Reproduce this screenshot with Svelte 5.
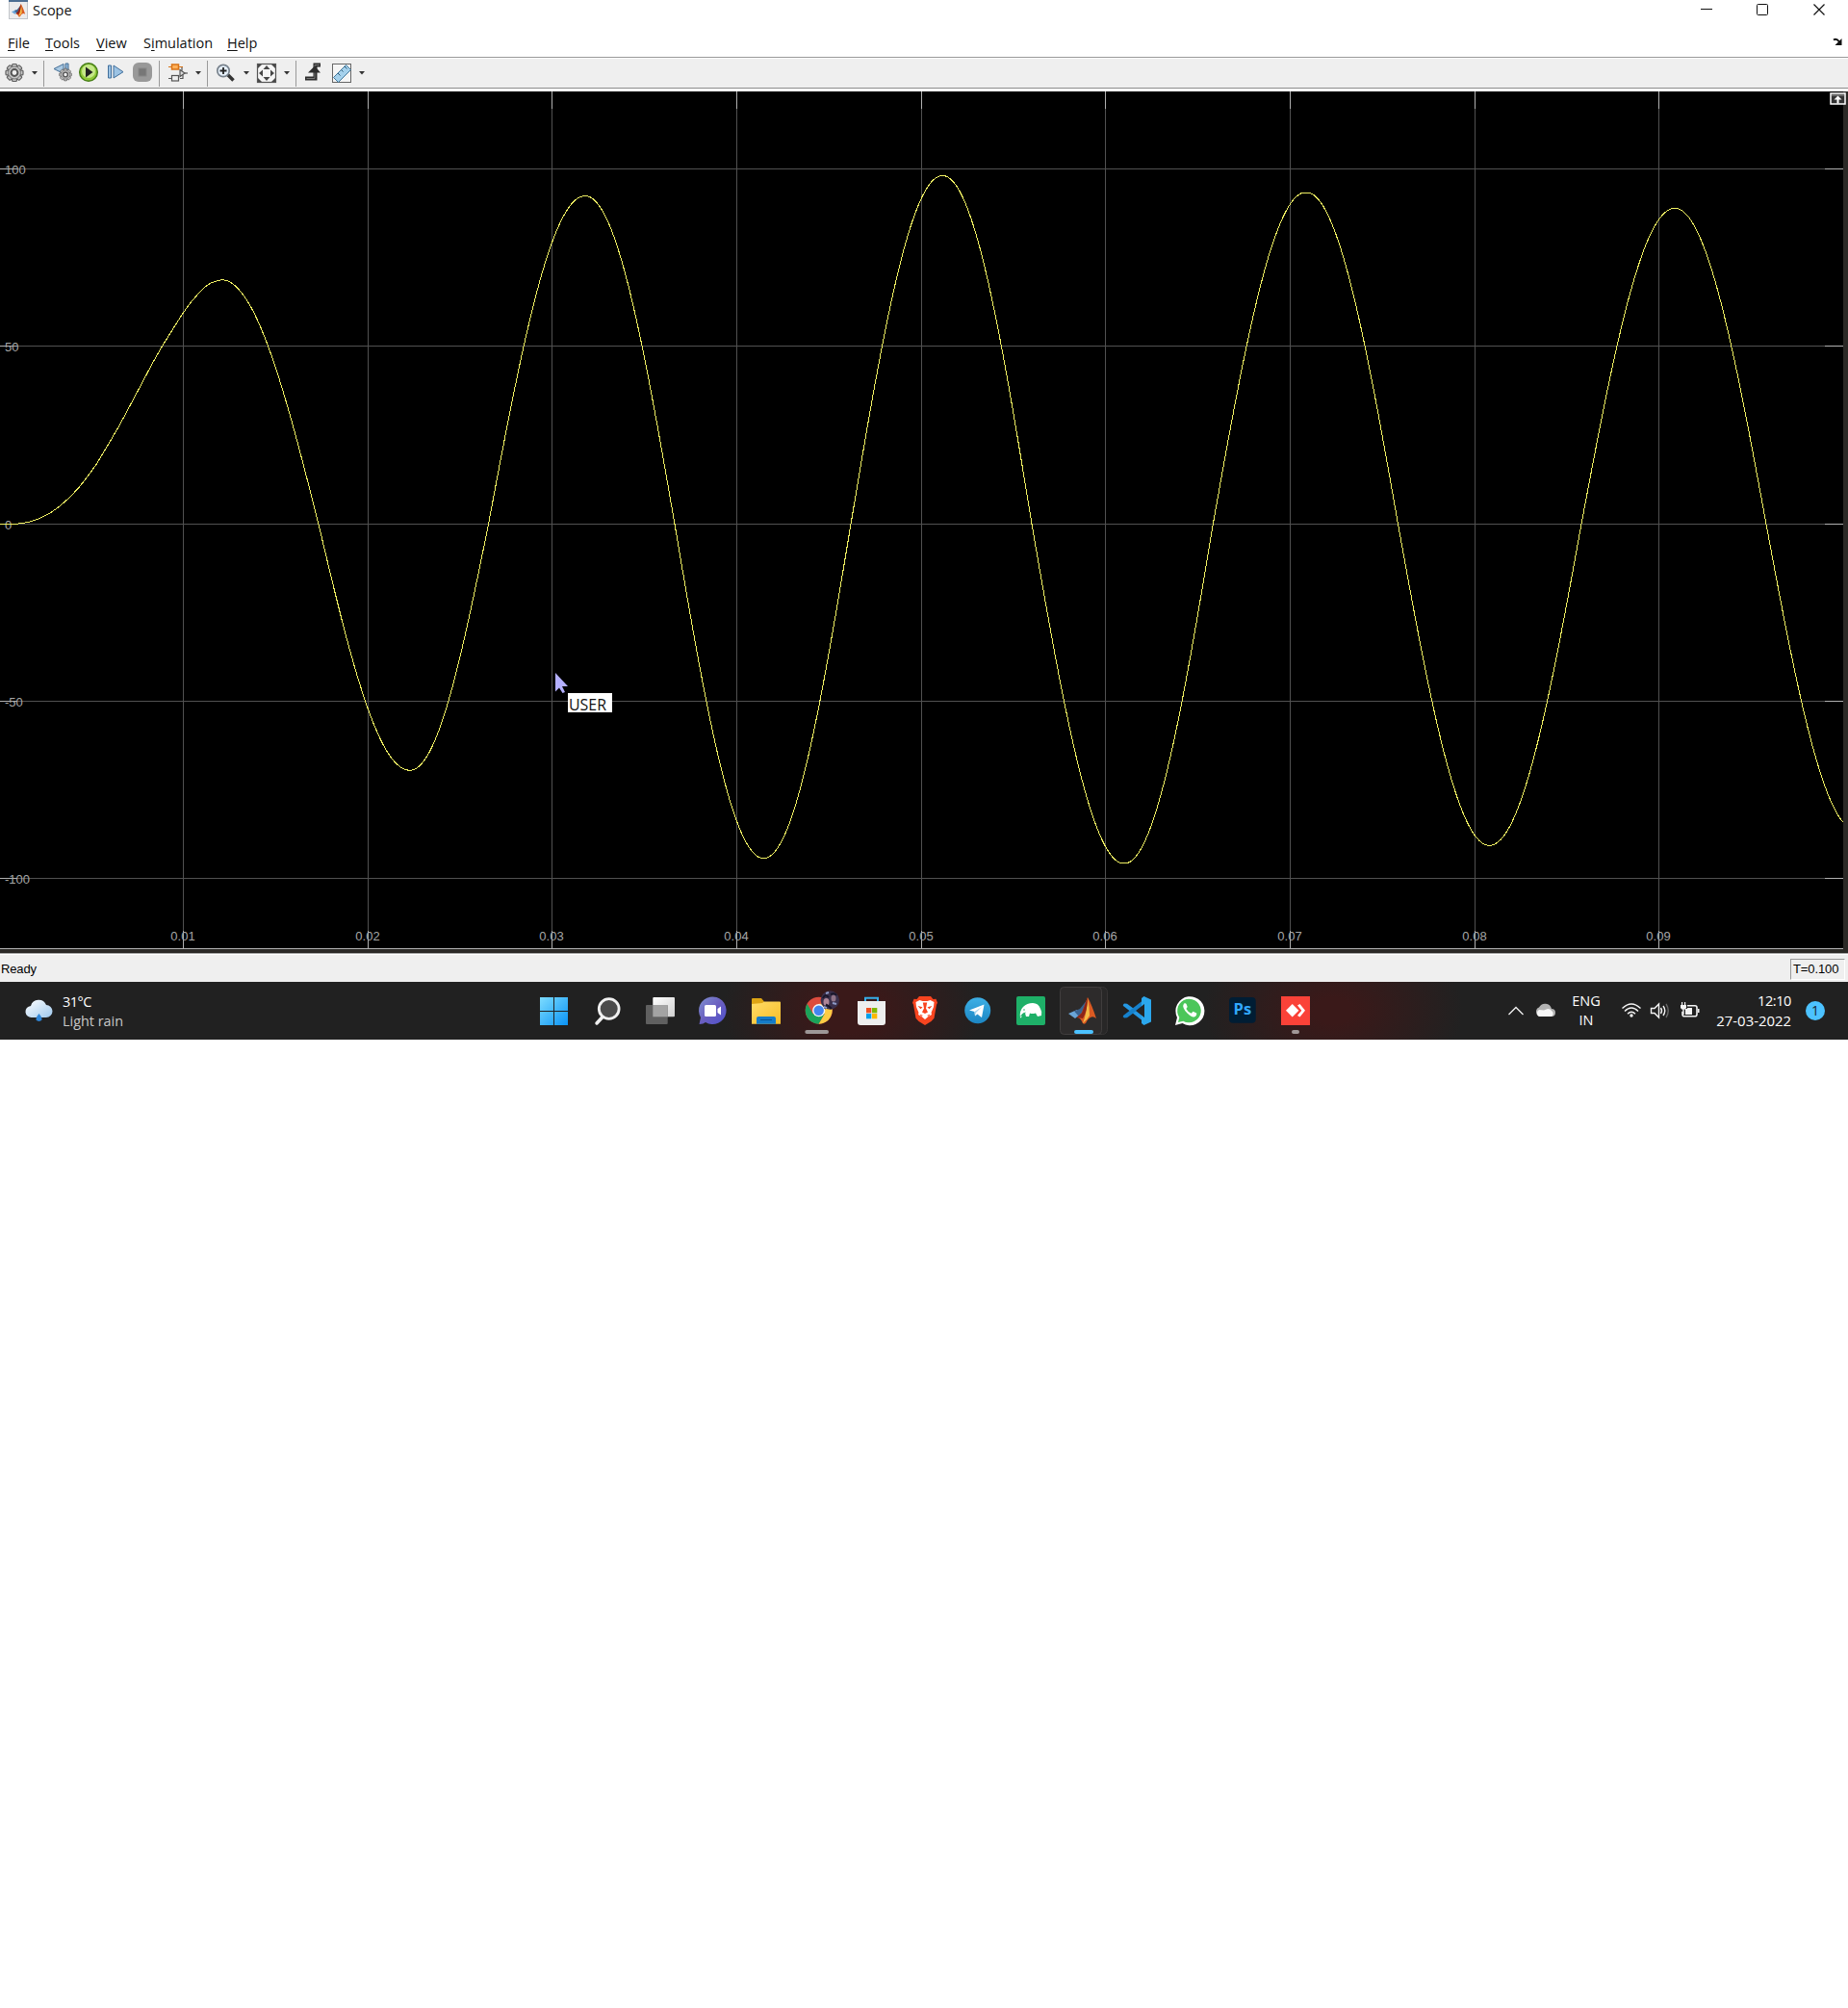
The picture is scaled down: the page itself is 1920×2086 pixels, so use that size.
<script>
  const columns = [190, 382, 573, 765, 957, 1148, 1340, 1532, 1723];
  const rows = [
    { y: 175, label: '100' },
    { y: 359, label: '50' },
    { y: 544, label: '0' },
    { y: 728, label: '-50' },
    { y: 912, label: '-100' }
  ];
  const rise = [[0, 544.5], [12, 544.4], [22, 543.8], [32, 541.8], [42, 538.2], [53, 532.3], [62, 526], [72, 517], [82, 506.5], [91, 495], [100, 482.5], [113, 461], [124, 442], [135, 421.5], [147, 399], [158, 378], [169.5, 358], [182, 338], [190, 325.5], [198, 314.5], [206, 305], [213, 298], [220, 293.5], [230, 290.6]];
  // Alternating turning points and zero crossings of the damped response
  const peaks = [[230, 290.6], [426, 800.3], [608, 203.5], [793.5, 891.8], [979.3, 182.4], [1168, 897.2], [1357, 199.6], [1547.5, 878.4], [1740, 216.3], [1928, 862]];
  const zeros = [331, 507.5, 701, 884, 1072, 1260.3, 1452.5, 1643, 1835];
  const base = 544.5;
  let points = [...rise];
  for (let k = 0; k < zeros.length; k++) {
    const [x0, y0] = peaks[k];
    const [x1, y1] = peaks[k + 1];
    const z = zeros[k];
    for (let x = x0 + 3; x < x1; x += 3) {
      const y = x < z
        ? base + (y0 - base) * Math.cos(((x - x0) / (z - x0)) * Math.PI / 2)
        : base + (y1 - base) * Math.sin(((x - z) / (x1 - z)) * Math.PI / 2);
      points.push([x, y]);
    }
  }
  const trace = points.filter((p) => p[0] < 1919).map((p) => p[0].toFixed(1) + ',' + (p[1] - 95).toFixed(1)).join(' ');
  const teeth = [0, 45, 90, 135, 180, 225, 270, 315];
</script>

{#snippet membrane()}
  <path d="M0 17 L9 13 L13 17 L7 22 Z" fill="#6aa5d8" />
  <path d="M6 14.5 L12 12 L20 2 L16 17 L11 20 Z" fill="#3a6290" />
  <path d="M9 21 L14 16 L20 0 Q24 7 29 22 Q23 17 18 27 Q15 29 14 25 Q12 21 9 21 Z" fill="#db5a22" />
  <path d="M20 1 Q19 17 15 27 Q20 23 22 19 Q22 10 20 1Z" fill="#f4bb48" />
  <path d="M20 0 L14 16 L9 21 L15 22 Q20 14 20 0Z" fill="#8d2418" />
{/snippet}

{#snippet gear(cx, cy, r)}
  <g transform="translate({cx} {cy}) scale({r / 9})">
    {#each teeth as a}
      <rect x="-2.4" y="-9" width="4.8" height="5" rx="1" transform="rotate({a})" fill="#c4c4c4" stroke="#606060" stroke-width="1.2" />
    {/each}
    <circle r="6.5" fill="#c2c2c2" stroke="#777" />
    <circle r="3.4" fill="#eee" stroke="#555" stroke-width="2" />
  </g>
{/snippet}

{#snippet arrow(x)}
  <svg class="ic" style:width="12px" viewBox="{x - 6} 0 12 32"><path d="M{x - 3} 14 h6 l-3 3.5z" fill="#333" /></svg>
{/snippet}

<div class="window">
  <header class="title">
    <svg width="20" height="20" viewBox="0 0 20 20">
      <rect x=".5" y=".5" width="19" height="19" fill="#ececec" stroke="#c1c5ca" />
      <path d="M0 1h20" stroke="#4d6e92" stroke-width="2" />
      <g transform="translate(3 4) scale(.49)">{@render membrane()}</g>
    </svg>
    <span class="name">Scope</span>
    <svg class="controls" width="150" height="22" viewBox="1756 0 150 22" fill="none" stroke="#111">
      <path d="M1767 9.5h12" />
      <rect x="1825.5" y="4.5" width="11" height="11" rx="1" />
      <path d="M1884.5 4.500l11 11m0-11l-11 11" stroke-width="1.2" />
    </svg>
  </header>

  <nav class="menu">
    <span class="m1"><u>F</u>ile</span>
    <span class="m2"><u>T</u>ools</span>
    <span class="m3"><u>V</u>iew</span>
    <span class="m4">S<u>i</u>mulation</span>
    <span class="m5"><u>H</u>elp</span>
    <svg class="dock" width="12" height="10" viewBox="0 0 12 10"><path d="M1 2.500q3-2 6 2" fill="none" stroke="#111" stroke-width="2" /><path d="M9.500 1v7h-7z" fill="#111" /></svg>
  </nav>

  <div class="toolbar">
    <svg class="ic" style:width="30px" viewBox="0 0 30 32">{@render gear(15, 15.500, 9)}</svg>
    {@render arrow(36)}
    <i class="sep"></i>
    <svg class="ic" style:width="116px" viewBox="46 0 116 32">
      <path d="M56 11.500l10-5v10z" fill="#a9c9e3" stroke="#456f96" /><path d="M68 6h3v12h-3z" fill="#8fb6d8" stroke="#456f96" />
      {@render gear(68, 17.500, 6.300)}
      <circle cx="92" cy="15" r="9.300" fill="#8fca37" stroke="#477e18" stroke-width="1.500" />
      <circle cx="92" cy="14" r="7" fill="#d7f2a4" opacity=".75" />
      <path d="M89 9.500l7.500 5.500-7.500 5.500z" fill="#222" />
      <path d="M112.500 8h3v13h-3zM118 8l10 6.700L118 21z" fill="#9cc3e4" stroke="#416f9b" />
      <rect x="138" y="5" width="20" height="20" rx="6" fill="#999" /><rect x="144" y="11" width="8" height="8" fill="#777" stroke="#888" />
    </svg>
    <i class="sep"></i>
    <svg class="ic" style:width="34px" viewBox="166 0 34 32">
      <g fill="none" stroke="#555" stroke-width="1.200">
        <path d="M175 9.500h14v4M175 21.500h4m8 0h3v-4" />
        <rect x="178.500" y="18.500" width="7" height="5.500" fill="#eee" />
        <path d="M187 12.500l5 3.500-5 3.500z" fill="#ddd" /><path d="M192 16h3" />
        <path d="M175 9.500h4m7 0h4" stroke="#d97316" />
        <rect x="178.500" y="7" width="7" height="5" fill="#ffb15b" stroke="#d97316" stroke-width="1.500" />
      </g>
    </svg>
    {@render arrow(206)}
    <i class="sep"></i>
    <svg class="ic" style:width="34px" viewBox="216 0 34 32">
      <path d="M236 17l6.500 6.500" stroke="#333" stroke-width="3.500" />
      <circle cx="232" cy="13.500" r="6.200" fill="#e6f0fa" stroke="#78828c" stroke-width="1.700" /><path d="M228.500 13.500h7M232 10v7" stroke="#222" stroke-width="1.800" />
    </svg>
    {@render arrow(256)}
    <svg class="ic" style:width="30px" viewBox="262 0 30 32">
      <rect x="267.500" y="6.500" width="19" height="19" fill="#f6f6f6" stroke="#555" stroke-width="1.200" />
      <g fill="#484848"><path d="M277 8l3.500 4h-7zM277 24l3.500-4h-7zM269 16l4-3.500v7zM285 16l-4-3.500v7z" /><path d="M268 7h4l-4 4zM286 7v4l-4-4zM268 25v-4l4 4zM286 25h-4l4-4z" /></g>
    </svg>
    {@render arrow(298)}
    <i class="sep"></i>
    <svg class="ic" style:width="62px" viewBox="308 0 62 32">
      <path d="M317 21.500h10.500v-14h5.500" fill="none" stroke="#2d2d2d" stroke-width="4" />
      <path d="M318.500 21.500h8.500v-14h5" fill="none" stroke="#777" stroke-width="1" />
      <path d="M320 15.500l7-7 6 7z" fill="#2d2d2d" />
      <rect x="345.500" y="6.500" width="19" height="19" fill="#f5f5f5" stroke="#666" />
      <path d="M346.500 20.500l13-13 5 5-13 13z" fill="#a5d1ec" stroke="#40779b" />
      <path d="M351 16l2.500 2.500m1-6l2 2m1.500-5.500l2.500 2.500" stroke="#2b5977" />
    </svg>
    {@render arrow(376)}
  </div>

  <main class="plot">
    <svg width="1915" height="895" viewBox="0 0 1915 895">
      <g shape-rendering="crispEdges">
        {#each rows as r}
          <path d="M0 {r.y - 94.5}H1915" stroke="#515151" />
          <path d="M0 {r.y - 94.5}H18M1896 {r.y - 94.5}H1915" stroke="#b0b0b0" />
        {/each}
        {#each columns as x}
          <path d="M{x + .5} 0V890" stroke="#515151" />
          <path d="M{x + .5} 0V18M{x + .5} 872V890" stroke="#b0b0b0" />
        {/each}
        <rect y="890" width="1915" height="1" fill="#b0b0b0" />
        <rect y="891" width="1915" height="4" fill="#2b2926" />
      </g>
      <g class="axis">
        {#each rows as r}<text x="5" y={r.y - 95 + 5.500}>{r.label}</text>{/each}
        {#each columns as x, i}<text x={x} y="882" text-anchor="middle">0.0{i + 1}</text>{/each}
      </g>
      <polyline points={trace} fill="none" stroke="#efef62" stroke-width="1" shape-rendering="crispEdges" />
      <path d="M577 604v19.500l4-4 3.500 5.500 2.500-1-3-6h6z" fill="#b4b0ff" />
      <rect x="590" y="625" width="46" height="20" fill="#fff" />
      <text class="tip" x="591" y="643" textLength="39" lengthAdjust="spacingAndGlyphs">USER</text>
    </svg>
    <svg class="corner" width="17" height="13" viewBox="0 0 17 13"><rect x="1" y="1" width="15" height="11" fill="#333" stroke="#fff" stroke-width="1.500" /><path d="M2 3h13" stroke="#999" /><path d="M8.500 3.500l4 4h-3v4h-2v-4h-3z" fill="#fff" /></svg>
  </main>

  <div class="status"><span class="ready">Ready</span><span class="clock">T=0.100</span></div>

  <footer class="taskbar">
    <div class="weather">
      <svg width="30" height="60" viewBox="26 0 30 60">
        <defs><linearGradient id="cl" x2="1" y2="1"><stop stop-color="#fff" /><stop offset="1" stop-color="#9fc9ee" /></linearGradient></defs>
        <path d="M33 37a6 6 0 0 1-1-12 8.500 8.500 0 0 1 16-1 6.500 6.500 0 0 1 0 13z" fill="url(#cl)" />
        <path d="M40.500 33q-6 7 0 8 6-1 0-8z" fill="#2f86d8" />
      </svg>
      <div class="lines"><span class="temp">31°C</span><span class="rain">Light rain</span></div>
    </div>

    <div class="apps">
      <svg viewBox="0 0 55 60"><defs><linearGradient id="win" gradientUnits="userSpaceOnUse" x1="13" y1="16" x2="42" y2="45"><stop stop-color="#7ddcff" /><stop offset="1" stop-color="#0a93f5" /></linearGradient></defs><path d="M13 16h14v14H13zM28 16h14v14H28zM13 31h14v14H13zM28 31h14v14H28z" fill="url(#win)" /></svg>
      <svg viewBox="0 0 55 60"><path d="M23 36.500l-6 6.500" stroke="#eee" stroke-width="3.500" stroke-linecap="round" /><circle cx="29.700" cy="28" r="10.400" fill="#4b4b4b" stroke="#f0f0f0" stroke-width="2.800" /></svg>
      <svg viewBox="0 0 55 60"><defs><linearGradient id="tv" x2="1" y2="1"><stop stop-color="#fff" /><stop offset="1" stop-color="#d0d0d0" /></linearGradient></defs><rect x="20.300" y="16" width="22.700" height="20.300" rx="1" fill="url(#tv)" /><rect x="13" y="24" width="22.700" height="20" rx="1" fill="#606060" /><path d="M20.300 24h15.400v12.300H20.300z" fill="#a3a3a3" /></svg>
      <svg viewBox="0 0 55 60"><defs><linearGradient id="ch" x2="1" y2="1"><stop stop-color="#7f91d0" /><stop offset=".5" stop-color="#6a5fc0" /><stop offset="1" stop-color="#4e50cd" /></linearGradient></defs><path d="M13.500 44l1.500-7a14.300 14.300 0 1 1 5 5q-2 2-6.500 2z" fill="url(#ch)" /><rect x="19" y="24" width="12" height="12" rx="1.500" fill="#fff" /><path d="M32.500 28l3.500-2.500v9l-3.500-2.500z" fill="#fff" /></svg>
      <svg viewBox="0 0 55 60"><defs><linearGradient id="fo" x2="1" y2="1"><stop stop-color="#ffdc67" /><stop offset="1" stop-color="#f7bd28" /></linearGradient></defs><path d="M13 18q0-1 1-1h9l3 3.500v4H13z" fill="#dda414" /><path d="M13 23l11-1 2-1.500h16q1 0 1 1V43.700H13z" fill="url(#fo)" /><path d="M18 43.700V38q0-2 2-2h16q2 0 2 2v5.700z" fill="#147cc9" /><path d="M22 39.500h12" stroke="#075293" /></svg>
      <svg viewBox="0 0 55 60">
        <circle cx="27.700" cy="29.700" r="14" fill="#dd4c3e" />
        <path d="M15.580 22.700A14 14 0 0 0 27.700 43.700l6.060-10.500-6.060-3.500-6.060 3.500z" fill="#1ba35a" /><path d="M27.700 43.700A14 14 0 0 0 39.820 22.700H27.700v7l6.060 3.500z" fill="#fdcc44" />
        <circle cx="27.700" cy="29.700" r="6.600" fill="#f4f4f4" /><circle cx="27.700" cy="29.700" r="5.200" fill="#4286f0" />
        <circle cx="39.300" cy="19" r="9.700" fill="#3b304b" /><ellipse cx="35.500" cy="21" rx="3" ry="4" fill="#ae8596" /><ellipse cx="43" cy="17" rx="2.500" ry="3.500" fill="#907487" /><path d="M32 17q2-5 6-1M34 28l2-4 3 2 2 2M40 13q4-2 6 1" stroke="#191629" stroke-width="2" fill="none" /><path d="M33 26l3 1m6-5l4 1M35 12l3-1" stroke="#8e9bc7" stroke-width="2" />
        <rect x="13.300" y="50" width="24.700" height="4" rx="2" fill="#9d9797" />
      </svg>
      <svg viewBox="0 0 55 60"><path d="M21 21v-4.200h13V21" fill="none" stroke="#36aee9" stroke-width="2" /><path d="M13 20h29v22q0 3-3 3H16q-3 0-3-3z" fill="#eee" /><path d="M22 27h5.300v5.300H22z" fill="#ef5022" /><path d="M28 27h5.300v5.300H28z" fill="#7fb900" /><path d="M22 33h5.300v5.300H22z" fill="#00a1ed" /><path d="M28 33h5.300v5.300H28z" fill="#fcb800" /></svg>
      <svg viewBox="0 0 55 60"><path d="M22 15h12l2.500 3 3-.2 1.500 4-1 2-2.500 14-3 3.200-6.500 4-6.500-4-3-3.200L16 23.800l-1-2 1.500-4 3 .2z" fill="#f8441f" /><path d="M18.500 21l4-2 3 1h5l3-1 4 2-.5 5-2.500 6 .5 2-3.500 2-3.500 3-3.500-3-3.500-2 .5-2-2.500-6z" fill="#fff" /><path d="M20.500 25l5 1.200-2 2zm15 0l-5 1.200 2 2zM25.800 21.500h4.400l-1.200 6 2 4-3 1.500-3-1.500 2-4zM22.500 33.500l3.500 1.500-2 .8zm11 0L30 35l2 .8z" fill="#f8441f" /></svg>
      <svg viewBox="0 0 55 60"><defs><linearGradient id="tg" x2="0" y2="1"><stop stop-color="#3db0e6" /><stop offset="1" stop-color="#1c86c3" /></linearGradient></defs><circle cx="27.700" cy="29.700" r="13.500" fill="url(#tg)" /><path d="M19 29.500L34.500 23.500 32 37l-4.500-3.500-2.500 2-.5-4.500z" fill="#fff" /><path d="M24.500 31l7.500-5-6 6-1 3.500z" fill="#a7d5ee" /></svg>
      <svg viewBox="0 0 55 60"><rect x="13" y="15" width="30" height="30" rx="2" fill="#1eb068" /><path d="M17 37q-1-7 3-11 4-4 10-4 6 0 8 6 2 3 1 7l-4 1-2-3.500q-4 1-6 0l-1 3.500h-3l-1-3.500-3 1-1 4z" fill="#fff" /><path d="M17.500 36q2-4 5-4" stroke="#1eb068" fill="none" /><circle cx="21" cy="29" r=".8" fill="#1eb068" /></svg>
      <svg viewBox="0 0 55 60"><rect x="6" y="5.500" width="46.500" height="49" rx="5" fill="#282727" stroke="#363434" /><rect x="3.500" y="5.500" width="43" height="49" rx="4" fill="#2d2b2b" stroke="#403d3d" /><g transform="translate(12 16)">{@render membrane()}</g><rect x="18" y="50" width="20" height="4" rx="2" fill="#4cc2ff" /></svg>
      <svg viewBox="0 0 55 60"><path d="M15 22.500l3 .2L38 37.500v6L14 25q-1-1 1-2.500z" fill="#2598e4" /><path d="M15 37.500l3-.2L38 22.500v-6L14 35q-1 1 1 2.500z" fill="#1681cc" /><path d="M35.500 15l7.500 3.500v23L35.500 45 33 43V17z" fill="#2ba7ed" /><path d="M36 23v14l-9-7z" fill="#242323" /></svg>
      <svg viewBox="0 0 55 60"><path d="M13 45l2-8a15 15 0 1 1 5.500 6z" fill="#fff" /><path d="M16 42l1.300-5a12.300 12.300 0 1 1 4 3.700z" fill="#4bc65a" /><path d="M22 22.500q2-1 2.700.8l1 2.700-1.300 2q1.800 3.500 5.300 4.700l1.800-2 3.700 1.800q.5 3-2.700 4Q30 37 25.500 32.500q-6-6-3.500-10z" fill="#fff" /></svg>
      <svg viewBox="0 0 55 60"><rect x="14" y="16" width="27.700" height="26.700" rx="4" fill="#001d34" /><text class="ps" x="27.900" y="34" text-anchor="middle">Ps</text></svg>
      <svg viewBox="0 0 55 60"><path d="M13 15h30v30H13z" fill="#fa4238" /><path d="M18 29.700l6.700-6.700 6.700 6.700-6.700 6.700z" fill="#fff" /><path d="M30 24.500l2.500-1.500 5.500 6.700-5.500 6.700-2.500-1.500 4-5.200z" fill="#fff" /><path d="M27.500 23.500l6 6.200-6 6.200" fill="none" stroke="#fa4238" stroke-width="1.200" /><rect x="24" y="50" width="8" height="4" rx="2" fill="#a09696" /></svg>
    </div>

    <div class="tray">
      <svg width="66" height="60" viewBox="1560 0 66 60"><path d="M1567.500 34l7.500-7.500 7.500 7.500" fill="none" stroke="#f2f2f2" stroke-width="1.300" /><path d="M1600 36a5 5 0 0 1-1-9.500 7 7 0 0 1 13 1.500 4 4 0 0 1 0 8z" fill="#b3b3b3" /><path d="M1599 36a4 4 0 0 1 0-7l5 .5 4-1.500q3 0 4 2a3.500 3.500 0 0 1 0 6z" fill="#f7f7f7" /></svg>
      <div class="lang"><span>ENG</span><span>IN</span></div>
      <svg width="100" height="60" viewBox="1675 0 100 60" fill="none" stroke="#f4f4f4" stroke-width="1.400">
        <path d="M1685.500 27.500q9.500-9 19 0M1688 30.500q7-7 14 0M1691 33.300q4-4 8 0" /><circle cx="1695" cy="35" r="1.700" fill="#f4f4f4" stroke="none" />
        <path d="M1715.500 27.500h3.500l4.500-4.500v14l-4.500-4.500h-3.500z" /><path d="M1725.500 27q2 3 0 6M1728 25q3.500 5 0 10" /><path d="M1731 23q4.500 7 0 14" stroke="#666" />
        <path d="M1753 24.700h8q2 0 2 2v7q0 2-2 2h-11q-2 0-2-2v-3" stroke-width="1.600" /><path d="M1764 28h1.500v4H1764z" fill="#f4f4f4" stroke="none" /><path d="M1751 32v-4h2v-1h5v7h-7z" fill="#f4f4f4" stroke="none" /><path d="M1746 24h6v3q-1 2-3 2t-3-2zM1747 21h1.200v3h-1.200zM1750 21h1.200v3h-1.200z" fill="#f4f4f4" stroke="none" /><path d="M1749 29v5" />
      </svg>
      <div class="time"><span>12:10</span><span class="date">27-03-2022</span></div>
      <span class="badge">1</span>
    </div>
  </footer>
</div>

<style>
  :global(body) { background: #fff; }
  .window { width: 1920px; font-family: 'Open Sans', 'Noto Sans', sans-serif; color: #111; }
  .window, .window * { box-sizing: border-box; }
  svg { display: block; flex: none; }
  .title { display: flex; height: 24px; padding-left: 9px; font-size: 14.5px; line-height: 21px; }
  .name { margin-left: 5px; }
  .controls { margin-left: auto; margin-right: 14px; }
  .menu { display: flex; height: 35px; padding-left: 8px; font-size: 14.5px; line-height: 42px; white-space: nowrap; }
  .menu u { text-underline-offset: 2px; text-decoration-thickness: 1px; }
  .m1 { width: 39px; }
  .m2 { width: 53px; }
  .m3 { width: 49px; }
  .m4 { width: 87px; }
  .dock { margin: 15px 4px 0 auto; }
  .toolbar { display: flex; height: 36px; background: #efefef; border-top: 1px solid #999; border-bottom: 3px solid #fafafa; box-shadow: inset 0 -1px #8d8d8d, inset 0 1px #fff; }
  .ic { height: 32px; }
  .sep { flex: none; width: 1px; height: 27px; margin: 3px 0 0 3px; background: #999; }
  .plot { position: relative; height: 895px; background: #2b2926; }
  .plot > svg:first-child { background: #000; }
  .axis { font: 13px 'Liberation Sans', sans-serif; fill: #a6a6a6; }
  .tip { font-size: 16px; fill: #111; }
  .corner { position: absolute; right: 2px; top: 1px; }
  .status { display: flex; justify-content: space-between; height: 30px; padding: 5px 3px 0 1px; border-top: 1px solid #aaa; box-shadow: inset 0 1px #fff; background: #efefef; font: 13px/22px 'Liberation Sans', sans-serif; color: #000; }
  .ready { letter-spacing: -.15px; }
  .clock { width: 57px; height: 22px; padding-left: 2px; line-height: 20px; letter-spacing: -.1px; border: 1px solid #fff; border-top-color: #999; border-left-color: #999; }
  .taskbar { display: flex; height: 60px; color: #fff; font-size: 14px; background: radial-gradient(ellipse 135px 90px at 885px 30px, #3a1919 25%, transparent), radial-gradient(ellipse 135px 90px at 1385px 30px, #3a1919 15%, transparent), #212121; }
  .weather { display: flex; width: 548px; padding-left: 26px; }
  .lines { display: flex; flex-direction: column; margin-left: 9px; padding-top: 11px; line-height: 20px; }
  .temp { letter-spacing: -.5px; font-size: 14.5px; }
  .rain { color: #c8c8c8; font-size: 14.4px; }
  .apps { display: flex; }
  .apps svg { width: 55px; height: 60px; }
  .ps { font: bold 16.5px 'Open Sans', sans-serif; fill: #31a8ff; }
  .tray { display: flex; margin-left: 187px; white-space: nowrap; }
  .lang, .time { display: flex; flex-direction: column; padding-top: 10px; line-height: 20px; }
  .lang { width: 44px; align-items: center; margin-right: 5px; font-size: 14.5px; }
  .time { width: 86px; align-items: flex-end; font-size: 14.5px; letter-spacing: -.4px; }
  .date { font-size: 14.9px; letter-spacing: 0; }
  .badge { width: 20px; height: 20px; margin: 20px 0 0 15px; border-radius: 50%; background: #4cc2ff; color: #182632; text-align: center; font-size: 14px; line-height: 20px; }
</style>
